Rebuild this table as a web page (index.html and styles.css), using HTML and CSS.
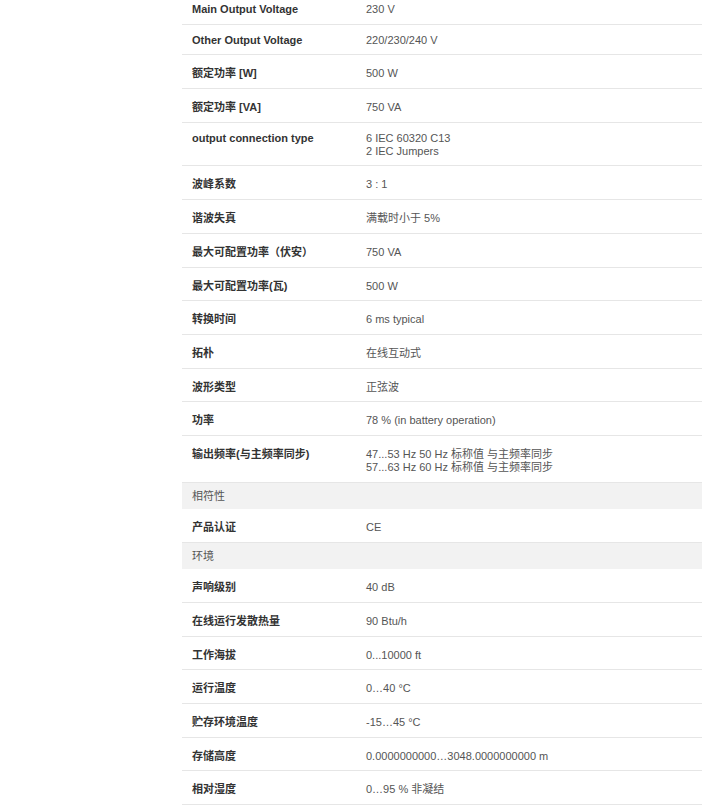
FILE: index.html
```html
<!DOCTYPE html>
<html lang="zh-CN">
<head>
<meta charset="utf-8">
<title>规格</title>
<link rel="stylesheet" href="styles.css">
</head>
<body>
<div class="page">
  <div class="specs">
    <div class="row"><div class="k">Main Output Voltage</div><div class="v">230 V</div></div>
    <div class="row"><div class="k">Other Output Voltage</div><div class="v">220/230/240 V</div></div>
    <div class="row"><div class="k">额定功率 [W]</div><div class="v">500 W</div></div>
    <div class="row"><div class="k">额定功率 [VA]</div><div class="v">750 VA</div></div>
    <div class="row"><div class="k">output connection type</div><div class="v">6 IEC 60320 C13<br>2 IEC Jumpers</div></div>
    <div class="row"><div class="k">波峰系数</div><div class="v">3 : 1</div></div>
    <div class="row"><div class="k">谐波失真</div><div class="v">满载时小于 5%</div></div>
    <div class="row"><div class="k">最大可配置功率（伏安）</div><div class="v">750 VA</div></div>
    <div class="row"><div class="k">最大可配置功率(瓦)</div><div class="v">500 W</div></div>
    <div class="row"><div class="k">转换时间</div><div class="v">6 ms typical</div></div>
    <div class="row"><div class="k">拓朴</div><div class="v">在线互动式</div></div>
    <div class="row"><div class="k">波形类型</div><div class="v">正弦波</div></div>
    <div class="row"><div class="k">功率</div><div class="v">78 % (in battery operation)</div></div>
    <div class="row"><div class="k">输出频率(与主频率同步)</div><div class="v">47...53 Hz 50 Hz 标称值 与主频率同步<br>57...63 Hz 60 Hz 标称值 与主频率同步</div></div>
    <div class="section">相符性</div>
    <div class="row"><div class="k">产品认证</div><div class="v">CE</div></div>
    <div class="section">环境</div>
    <div class="row"><div class="k">声响级别</div><div class="v">40 dB</div></div>
    <div class="row"><div class="k">在线运行发散热量</div><div class="v">90 Btu/h</div></div>
    <div class="row"><div class="k">工作海拔</div><div class="v">0...10000 ft</div></div>
    <div class="row"><div class="k">运行温度</div><div class="v">0…40 °C</div></div>
    <div class="row"><div class="k">贮存环境温度</div><div class="v">-15…45 °C</div></div>
    <div class="row"><div class="k">存储高度</div><div class="v">0.0000000000…3048.0000000000 m</div></div>
    <div class="row"><div class="k">相对湿度</div><div class="v">0…95 % 非凝结</div></div>
  </div>
</div>
</body>
</html>
```

FILE: styles.css
```css
html, body {
  margin: 0;
  padding: 0;
  background: #fff;
}
body {
  font-family: "Liberation Sans", Arial, "Noto Sans CJK SC", sans-serif;
  font-size: 11px;
  color: #333;
}
.page {
  padding-left: 182px;
  width: 520px;
  overflow: hidden;
}
.specs {
  margin-top: -6px;
}
.row {
  display: grid;
  grid-template-columns: 174px 1fr;
  align-items: baseline;
  border-bottom: 1px solid #e6e6e6;
}
.k, .v {
  padding: 9px 10px 7.7px;
}
.k {
  font-weight: bold;
  color: #333;
  line-height: normal;
}
.v {
  color: #555;
  line-height: 13px;
}
.section {
  background: #f2f2f2;
  color: #555;
  padding: 7px 10px 6.5px;
  line-height: 13px;
}
```
